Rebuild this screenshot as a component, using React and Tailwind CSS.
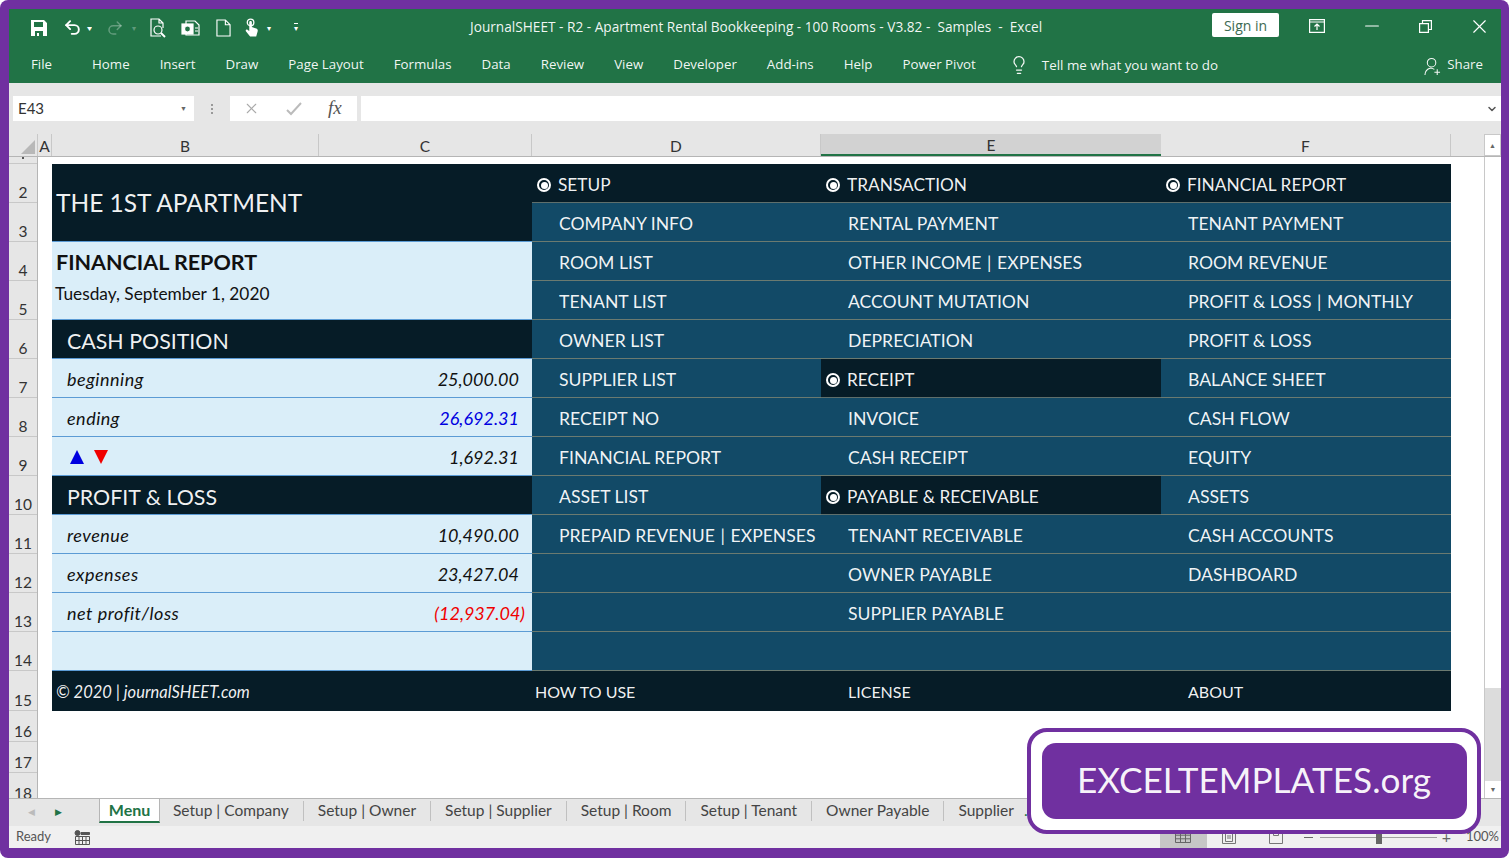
import { Undo2, Redo2, Lightbulb, X, Minus, ChevronDown } from "lucide-react";

const tabs = ["Home", "Insert", "Draw", "Page Layout", "Formulas", "Data", "Review", "View", "Developer", "Add-ins", "Help", "Power Pivot"];
const sheets = ["Setup | Company", "Setup | Owner", "Setup | Supplier", "Setup | Room", "Setup | Tenant", "Owner Payable"];
const rowNums = [
  [2, 39], [3, 39], [4, 39], [5, 39], [6, 39], [7, 39], [8, 39], [9, 39],
  [10, 39], [11, 39], [12, 39], [13, 39], [14, 39], [15, 40], [16, 31], [17, 31], [18, 31],
];

// type: h = section header, i = menu item, f = footer
const colD = [
  ["h", "SETUP"], ["i", "COMPANY INFO"], ["i", "ROOM LIST"], ["i", "TENANT LIST"], ["i", "OWNER LIST"],
  ["i", "SUPPLIER LIST"], ["i", "RECEIPT NO"], ["i", "FINANCIAL REPORT"], ["i", "ASSET LIST"],
  ["i", "PREPAID REVENUE \u200a|\u200a EXPENSES"], ["i", ""], ["i", ""], ["i", ""], ["f", "HOW TO USE"],
];
const colE = [
  ["h", "TRANSACTION"], ["i", "RENTAL PAYMENT"], ["i", "OTHER INCOME \u200a|\u200a EXPENSES"], ["i", "ACCOUNT MUTATION"], ["i", "DEPRECIATION"],
  ["h", "RECEIPT"], ["i", "INVOICE"], ["i", "CASH RECEIPT"], ["h", "PAYABLE & RECEIVABLE"],
  ["i", "TENANT RECEIVABLE"], ["i", "OWNER PAYABLE"], ["i", "SUPPLIER PAYABLE"], ["i", ""], ["f", "LICENSE"],
];
const colF = [
  ["h", "FINANCIAL REPORT"], ["i", "TENANT PAYMENT"], ["i", "ROOM REVENUE"], ["i", "PROFIT & LOSS \u200a|\u200a MONTHLY"], ["i", "PROFIT & LOSS"],
  ["i", "BALANCE SHEET"], ["i", "CASH FLOW"], ["i", "EQUITY"], ["i", "ASSETS"],
  ["i", "CASH ACCOUNTS"], ["i", "DASHBOARD"], ["i", ""], ["i", ""], ["f", "ABOUT"],
];

function Radio() {
  return (
    <span className="w-[14px] h-[14px] rounded-full border-2 border-white flex items-center justify-center shrink-0">
      <span className="w-[7px] h-[7px] rounded-full bg-white"></span>
    </span>
  );
}

function MenuColumn({ items, width, footerPad }) {
  return (
    <div className={`${width} shrink-0 flex flex-col pt-[7px] text-[17.6px] text-white/95`}>
      {items.map(([type, label], i) => {
        if (type === "h") {
          return (
            <div key={i} className="h-[39px] pt-[4px] bg-[#061c27] border-b border-[#5f6f6c] flex items-center gap-[7px] pl-[5px]">
              <Radio />
              <span className="text-[17.3px]">{label}</span>
            </div>
          );
        }
        if (type === "f") {
          return (
            <div key={i} className={`h-[40px] pt-[1px] bg-[#061c27] flex items-center text-[16px] ${footerPad}`}>{label}</div>
          );
        }
        return (
          <div key={i} className="h-[39px] pt-[5px] bg-[#124a67] border-b border-[#6b7a70] flex items-center pl-[27px] whitespace-pre">{label}</div>
        );
      })}
    </div>
  );
}

function ValueRow({ label, value, valueClass = "text-[#111] pr-[13px]", children }) {
  return (
    <div className="h-[39px] pt-[3px] bg-[#daeef9] border-b border-[#5b9bd5] flex items-center justify-between pl-[15px] text-[18px] italic text-[#111]">
      {children || <span className="tracking-[0.5px]">{label}</span>}
      <span className={valueClass}>{value}</span>
    </div>
  );
}

function DarkRow({ children }) {
  return (
    <div className="h-[39px] pt-[4px] bg-[#061c27] border-b border-[#5b9bd5] flex items-center pl-[15px] text-[21.4px] text-white/95">{children}</div>
  );
}

export default function App() {
  return (
    <div className="w-[1509px] h-[858px] bg-white relative overflow-hidden" style={{ fontFamily: "Lato, sans-serif" }}>
      <div className="w-full h-[858px] bg-[#7030a0] rounded-[8px] pl-[9px] pr-[8px] pt-[9px] pb-[10px]">
        <div className="h-full flex flex-col bg-[#e6e6e6] overflow-hidden" >
          {/* Title bar */}
          <div className="h-[37px] shrink-0 bg-[#217346] flex items-center text-white relative" style={{ fontFamily: "'Open Sans', sans-serif" }}>
            <div className="flex items-center pl-[22px] gap-[5px]">
              <svg viewBox="0 0 16 16" className="w-[16px] h-[16px]" fill="currentColor">
                <path d="M0 0h13l3 3v13H0zM3 2v5h9V2zM4 11v5h2v-3h2v3h4v-5z" fillRule="evenodd" />
              </svg>
              <Undo2 className="w-[19px] h-[19px] ml-[11px]" strokeWidth={2.4} />
              <span className="text-[8px] scale-x-125">▾</span>
              <Redo2 className="w-[18px] h-[18px] ml-[10px] text-white/30" strokeWidth={2} />
              <span className="text-[8px] text-white/30 ml-[3px]">▾</span>
              <svg viewBox="0 0 18 20" className="w-[18px] h-[20px] ml-[8px]" fill="none" stroke="currentColor" strokeWidth="1.2">
                <path d="M12 18H2V1h8l4 4v5M10 1v4h4" />
                <circle cx="9" cy="12" r="4" />
                <path d="M12 15l4 4" strokeWidth="2" />
              </svg>
              <svg viewBox="0 0 20 18" className="w-[20px] h-[18px] ml-[9px]" fill="none" stroke="currentColor" strokeWidth="1.2">
                <path d="M5 2h9l4 4v10H5z" />
                <rect x="1" y="5" width="11" height="10" fill="currentColor" />
                <circle cx="6.5" cy="10" r="3" fill="#217346" />
                <path d="M14 9h3M14 12h3" />
              </svg>
              <svg viewBox="0 0 16 19" className="w-[15px] h-[18px] ml-[10px]" fill="none" stroke="currentColor" strokeWidth="1.2">
                <path d="M1 1h9l5 5v12H1zM10 1v5h5" />
              </svg>
              <svg viewBox="0 0 16 20" className="w-[15px] h-[20px] ml-[8px]" fill="currentColor">
                <circle cx="7" cy="4" r="3.5" fill="none" stroke="currentColor" strokeWidth="1.4" />
                <path d="M5.6 4c0-1.8 2.8-1.8 2.8 0v5l4.600 1.500c1.400.5 1.900 1.600 1.600 3L13 19H6.500L2 13.500c-.8-1.300.8-2.500 2-1.500l1.600 1.300z" />
              </svg>
              <span className="text-[8px] ml-[3px]">▾</span>
              <span className="text-[8px] ml-[18px] border-t border-white leading-[8px]">▾</span>
            </div>
            <div className="absolute left-[461px] text-[13.67px] whitespace-nowrap text-white/95">JournalSHEET - R2 - Apartment Rental Bookkeeping - 100 Rooms - V3.82 -&nbsp; Samples&nbsp; -&nbsp; Excel</div>
            <div className="ml-auto flex items-center">
              <div className="w-[67px] h-[24px] bg-white rounded-[2px] text-[#3d6a52] text-[14px] flex items-center justify-center mt-[-5px]">Sign in</div>
              <svg viewBox="0 0 16 14" className="w-[16px] h-[14px] ml-[30px] mt-[-3px]" fill="none" stroke="currentColor" strokeWidth="1.2">
                <path d="M.6.6h14.800v12.800H.6zM.6 3h14.800" />
                <path d="M8 11V5M5.500 7.500L8 5l2.500 2.500" />
              </svg>
              <Minus className="w-[22px] h-[22px] ml-[36px] mt-[-3px]" strokeWidth={1.1} />
              <svg viewBox="0 0 13 13" className="w-[13px] h-[13px] ml-[36px] mt-[-3px]" fill="none" stroke="currentColor" strokeWidth="1.2">
                <path d="M.6 3.600h8.800v8.800H.6zM3.500 3.500V.6h8.900v8.900H9.500" />
              </svg>
              <X className="w-[23px] h-[23px] ml-[36px] mr-[10px] mt-[-3px]" strokeWidth={1.2} />
            </div>
          </div>

          {/* Ribbon tabs */}
          <div className="h-[37px] shrink-0 bg-[#217346] flex items-center text-white/95 text-[13.3px] pt-[1px]" style={{ fontFamily: "'Open Sans', sans-serif" }}>
            <span className="ml-[22px] mr-[40px]">File</span>
            <div className="flex gap-[30px]">
              {tabs.map((t) => <span key={t} className="whitespace-nowrap">{t}</span>)}
            </div>
            <Lightbulb className="w-[20px] h-[22px] ml-[33px]" strokeWidth={1.5} />
            <span className="ml-[13px] text-[13.4px]">Tell me what you want to do</span>
            <svg viewBox="0 0 18 20" className="w-[17px] h-[19px] ml-auto mt-[3px]" fill="none" stroke="currentColor" strokeWidth="1.1">
              <circle cx="8" cy="6" r="4.500" />
              <path d="M1 19c0-4 2.500-6.500 6-7.500 1.500.3 3 .8 4 1.500M14 13v6M11 16h6" />
            </svg>
            <span className="ml-[6px] mr-[18px]">Share</span>
          </div>

          {/* Formula bar */}
          <div className="h-[51px] shrink-0 flex flex-col bg-[#e6e6e6]">
            <div className="h-[13px] shrink-0"></div>
            <div className="flex items-stretch h-[25px]">
              <div className="ml-[4px] w-[181px] bg-white flex items-center justify-between pl-[5px] pr-[7px] text-[15px] text-[#333]">
                <span>E43</span>
                <span className="text-[7px] text-[#666]">▼</span>
              </div>
              <div className="w-[36px] flex flex-col items-center justify-center gap-[2px]">
                <span className="w-[2px] h-[2px] bg-[#999]"></span>
                <span className="w-[2px] h-[2px] bg-[#999]"></span>
                <span className="w-[2px] h-[2px] bg-[#999]"></span>
              </div>
              <div className="w-[127px] bg-white flex items-center text-[#aaa]">
                <X className="w-[17px] h-[17px] ml-[13px]" strokeWidth={1.5} />
                <svg viewBox="0 0 16 14" className="w-[16px] h-[14px] ml-[26px]" fill="none" stroke="#bbb" strokeWidth="2">
                  <path d="M1 8l4 4L15 1" />
                </svg>
                <span className="ml-[26px] text-[19px] italic text-[#555]" style={{ fontFamily: "'Liberation Serif', serif" }}>fx</span>
              </div>
              <div className="flex-1 ml-[4px] bg-white flex items-center justify-end pr-[3px]">
                <ChevronDown className="w-[12px] h-[12px] text-[#555]" strokeWidth={3} />
              </div>
            </div>
          </div>

          {/* Column headers */}
          <div className="h-[23px] shrink-0 flex bg-[#e6e6e6] border-b border-[#b5b5b5] text-[15.5px] text-[#333]">
            <div className="w-[29px] relative border-r border-[#c8c8c8]">
              <span className="absolute right-[2px] bottom-[2px] w-0 h-0 border-l-[14px] border-l-transparent border-b-[14px] border-b-[#b8b8b8]"></span>
            </div>
            <div className="w-[14px] pt-[3px] flex items-center justify-center border-r border-[#c8c8c8]">A</div>
            <div className="w-[267px] pt-[3px] flex items-center justify-center border-r border-[#c8c8c8]">B</div>
            <div className="w-[213px] pt-[3px] flex items-center justify-center border-r border-[#c8c8c8]">C</div>
            <div className="w-[289px] pt-[3px] flex items-center justify-center border-r border-[#c8c8c8]">D</div>
            <div className="w-[340px] pt-[3px] flex items-center justify-center bg-[#d2d2d2] border-b-2 border-[#217346]">E</div>
            <div className="w-[290px] pt-[3px] flex items-center justify-center border-r border-[#c8c8c8]">F</div>
            <div className="flex-1"></div>
            <div className="w-[17px] bg-white border border-[#c8c8c8] flex items-center justify-center text-[7px] text-[#666]">▲</div>
          </div>

          {/* Sheet */}
          <div className="flex-1 flex min-h-0 bg-white">
            <div className="w-[29px] shrink-0 bg-[#e6e6e6] border-r border-[#b5b5b5] overflow-hidden text-[15.5px] text-[#333]">
              <div className="h-[7px] border-b border-[#c8c8c8] flex justify-center"><span className="w-[2px] h-[2px] bg-[#555]"></span></div>
              {rowNums.map(([n, h]) => (
                <div key={n} className="border-b border-[#c8c8c8] flex items-end justify-center" style={{ height: h }}>
                  <span className="leading-[20px]">{n}</span>
                </div>
              ))}
            </div>
            <div className="w-[14px] shrink-0"></div>

            {/* Left panel */}
            <div className="w-[480px] shrink-0 flex flex-col pt-[7px]">
              <div className="h-[78px] pt-[2px] bg-[#061c27] border-b border-[#5b9bd5] flex items-center pl-[4px] text-[24.5px] text-white/95">THE 1ST APARTMENT</div>
              <div className="h-[78px] bg-[#daeef9] border-b border-[#5b9bd5] flex flex-col pl-[4px] text-[#111]">
                <span className="text-[21.5px] font-bold mt-[6px] leading-[28px]">FINANCIAL REPORT</span>
                <span className="text-[17.3px] mt-[7px] leading-[22px] ml-[-1px]">Tuesday, September 1, 2020</span>
              </div>
              <DarkRow>CASH POSITION</DarkRow>
              <ValueRow label="beginning" value="25,000.00" />
              <ValueRow label="ending" value="26,692.31" valueClass="text-[#0000e0] pr-[13px]" />
              <ValueRow value="1,692.31">
                <span className="flex items-center gap-[10px] ml-[3px] mt-[-2px]">
                  <span className="w-0 h-0 border-x-[7px] border-x-transparent border-b-[14px] border-b-[#0000e0]"></span>
                  <span className="w-0 h-0 border-x-[7px] border-x-transparent border-t-[14px] border-t-[#f00000]"></span>
                </span>
              </ValueRow>
              <DarkRow>PROFIT &amp; LOSS</DarkRow>
              <ValueRow label="revenue" value="10,490.00" />
              <ValueRow label="expenses" value="23,427.04" />
              <ValueRow label="net profit/loss" value="(12,937.04)" valueClass="text-[#f00000] pr-[7px]" />
              <div className="h-[39px] bg-[#daeef9] border-b border-[#5b9bd5]"></div>
              <div className="h-[40px] pt-[2px] bg-[#061c27] flex items-center pl-[4px] text-[16.5px] italic text-white/95">© 2020 | journalSHEET.com</div>
            </div>

            <MenuColumn items={colD} width="w-[289px]" footerPad="pl-[3px]" />
            <MenuColumn items={colE} width="w-[340px]" footerPad="pl-[27px]" />
            <MenuColumn items={colF} width="w-[290px]" footerPad="pl-[27px]" />
            <div className="flex-1"></div>

            {/* Vertical scrollbar */}
            <div className="w-[17px] shrink-0 flex flex-col border-l border-[#c8c8c8]">
              <div className="h-[531px] bg-white"></div>
              <div className="flex-1 bg-[#dcdcdc]"></div>
              <div className="h-[17px] bg-white flex items-center justify-center text-[7px] text-[#666]">▼</div>
            </div>
          </div>

          {/* Sheet tabs */}
          <div className="h-[28px] shrink-0 flex items-start bg-[#e6e6e6] border-t border-[#b5b5b5] text-[15.5px] text-[#444]">
            <div className="w-[90px] h-[25px] flex items-center text-[9px] shrink-0">
              <span className="ml-[19px] text-[#bbb]">◀</span>
              <span className="ml-[20px] text-[#217346]">▶</span>
            </div>
            <div className="h-[24px] w-[61px] bg-white border-x border-[#b5b5b5] border-b-2 border-b-[#217346] text-[#217346] text-[16px] font-bold flex items-center justify-center shrink-0">Menu</div>
            <div className="flex items-center h-[24px] pl-[13px] whitespace-nowrap">
              {sheets.map((s) => (
                <span key={s} className="flex items-center">
                  <span>{s}</span>
                  <span className="w-px h-[20px] bg-[#c0c0c0] mx-[14px]"></span>
                </span>
              ))}
              <span>Supplier</span>
              <span className="ml-[10px] text-[#217346]">.</span>
            </div>
          </div>

          {/* Status bar */}
          <div className="h-[22px] shrink-0 bg-[#f0f0f0] flex items-center text-[13px] text-[#555]">
            <span className="ml-[7px]">Ready</span>
            <svg viewBox="0 0 16 15" className="w-[16px] h-[15px] ml-[23px]" fill="none" stroke="#555" strokeWidth="1">
              <circle cx="3.500" cy="3" r="2.500" fill="#555" />
              <path d="M7 2.500h8.500v2H7z" fill="#555" />
              <path d="M1.500 6.500h14v8h-14zM5 6.500v8M8.500 6.500v8M12 6.500v8M1.500 10.500h14" />
            </svg>
            <div className="ml-auto flex items-center h-full">
              <div className="w-[47px] h-full bg-[#c6c6c6] flex items-center justify-center">
                <svg viewBox="0 0 16 12" className="w-[16px] h-[12px]" fill="none" stroke="#666" strokeWidth="1"><path d="M.5.500h15v11H.5zM5.500.500v11M10.500.500v11M.5 4.200h15M.5 7.800h15" /></svg>
              </div>
              <svg viewBox="0 0 14 14" className="w-[14px] h-[14px] ml-[15px]" fill="none" stroke="#777" strokeWidth="1"><path d="M.5.500h13v13H.5zM3.500 3.500h7v8h-7zM5 6h4M5 8h4" /></svg>
              <svg viewBox="0 0 14 14" className="w-[14px] h-[14px] ml-[33px]" fill="none" stroke="#777" strokeWidth="1"><path d="M.5.500h13v13H.5zM4.500.500v5h5v-5" /></svg>
              <span className="w-[9px] h-px bg-[#666] ml-[21px]"></span>
              <div className="w-[117px] h-px bg-[#a0a0a0] ml-[7px] relative">
                <span className="absolute left-[56px] top-[-6px] w-[6px] h-[13px] bg-[#666]"></span>
              </div>
              <span className="ml-[5px] text-[#666] text-[16px] leading-none">+</span>
              <span className="ml-[15px] mr-[2px]">100%</span>
            </div>
          </div>
        </div>
      </div>

      {/* Watermark badge */}
      <div className="absolute left-[1027px] top-[728px] w-[454px] h-[106px] bg-white border-4 border-[#7030a0] rounded-[20px] flex items-center justify-center">
        <div className="w-[425px] h-[76px] pb-[4px] bg-[#7030a0] rounded-[14px] flex items-center justify-center text-[35.2px] text-white/95">EXCELTEMPLATES.org</div>
      </div>
    </div>
  );
}
